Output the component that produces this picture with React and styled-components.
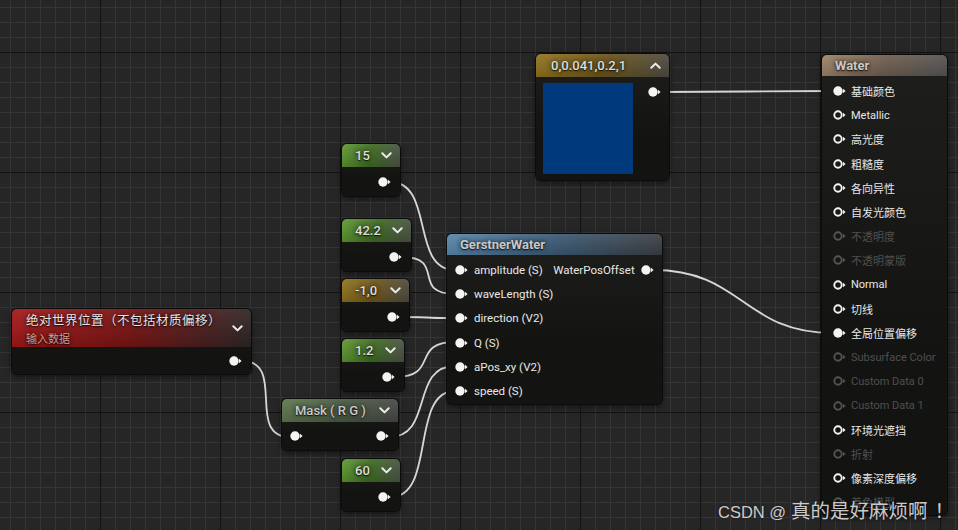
import React from 'react';
import styled, { createGlobalStyle } from 'styled-components';

const GlobalStyle = createGlobalStyle`
  html, body {
    margin: 0;
    padding: 0;
    background: #262626;
  }
  body {
    font-family: Roboto, "Noto Sans CJK SC", sans-serif;
  }
`;

const Canvas = styled.div`
  position: relative;
  width: 958px;
  height: 530px;
  overflow: hidden;
  background-color: #262626;
  background-image:
    linear-gradient(to right, #131313 1px, transparent 1px),
    linear-gradient(to bottom, #131313 1px, transparent 1px),
    linear-gradient(to right, #353535 1px, transparent 1px),
    linear-gradient(to bottom, #353535 1px, transparent 1px);
  background-size: 120px 120px, 120px 120px, 15px 15px, 15px 15px;
  background-position: 100px 0, 0 52px, 10px 0, 0 7px;
`;

const WireLayer = styled.svg`
  position: absolute;
  left: 0;
  top: 0;
  width: 958px;
  height: 530px;
  pointer-events: none;
`;

const TINTS = {
  green: ['#619a31', '#3d6a22', '#4b5146'],
  gold: ['#93741f', '#6b5519', '#4d4a42'],
  red: ['#a51818', '#781313', '#2c2626'],
  blue: ['#5a88ad', '#3b5a74', '#3b3f44'],
  brown: ['#a08468', '#6e5d4e', '#545454'],
  mask: ['#5f784f', '#4a5b43', '#454745'],
};

const Node = styled.div`
  position: absolute;
  left: ${p => p.$x}px;
  top: ${p => p.$y}px;
  width: ${p => p.$w}px;
  border-radius: 5px;
  overflow: hidden;
  background: linear-gradient(#1e1f1d, #131412 65%);
  box-shadow: 0 0 0 1px #0b0b0b, 0 2px 6px rgba(0, 0, 0, 0.6);
`;

const Header = styled.div`
  height: ${p => p.$h || 23}px;
  box-sizing: border-box;
  display: flex;
  align-items: center;
  justify-content: space-between;
  padding: 0 8px 0 ${p => p.$pl || 13}px;
  color: ${p => p.$muted ? '#c9c9c9' : '#dedede'};
  font-size: 13px;
  font-weight: ${p => p.$bold ? 700 : 500};
  text-shadow: 0 0 5px rgba(0, 0, 0, 0.85), 0 1px 1px rgba(0, 0, 0, 0.7);
  background:
    linear-gradient(rgba(255, 255, 255, 0.07), rgba(0, 0, 0, 0.12)),
    linear-gradient(100deg, ${p => TINTS[p.$tint][0]} 0%, ${p => TINTS[p.$tint][1]} 50%, ${p => TINTS[p.$tint][2]} 100%);
`;

const TitleStack = styled.div`
  display: flex;
  flex-direction: column;
  gap: 1px;
`;

const Title = styled.span`
  font-size: 12.5px;
  font-weight: 400;
  color: #e4e4e4;
  letter-spacing: 0.5px;
`;

const SubTitle = styled.span`
  font-size: 11px;
  font-weight: 400;
  color: #d69a8d;
`;

const Body = styled.div`
  height: ${p => p.$h}px;
  display: flex;
  align-items: center;
  justify-content: ${p => p.$between ? 'space-between' : 'flex-end'};
  padding: 0 9px 0 8px;
`;

const SwatchBody = styled.div`
  display: flex;
  align-items: flex-start;
  gap: 15px;
  padding: 6px 0 6px 7px;
`;

const Swatch = styled.div`
  width: 90px;
  height: 91px;
  background: ${p => p.$color};
`;

const SwatchPin = styled.div`
  margin-top: 4px;
  display: flex;
`;

const PinColumns = styled.div`
  display: flex;
  justify-content: space-between;
  padding: 3px 9px 1px ${p => p.$pl}px;
`;

const PinList = styled.div`
  display: flex;
  flex-direction: column;
`;

const PinRow = styled.div`
  height: 24.2px;
  display: flex;
  align-items: center;
  gap: ${p => p.$gap || 6}px;
  font-size: ${p => p.$fs || 11.5}px;
  color: ${p => p.$dim ? '#4f4f4f' : '#e8e8e8'};
  white-space: nowrap;
`;

const PinSvg = styled.svg`
  flex: none;
  display: block;
  opacity: ${p => p.$dim ? 0.28 : 1};
`;

const ChevSvg = styled.svg`
  flex: none;
  display: block;
`;

const Watermark = styled.div`
  position: absolute;
  left: 718px;
  top: 496px;
  display: flex;
  align-items: baseline;
  gap: 5px;
  font-family: "Liberation Sans", "Noto Sans CJK SC", sans-serif;
  line-height: 28px;
  color: rgba(236, 236, 236, 0.86);
  text-shadow: 0 0 2px rgba(0, 0, 0, 0.5);
  white-space: nowrap;
`;

const MarkLatin = styled.span`
  font-size: 16.5px;
`;

const MarkCjk = styled.span`
  font-family: "Noto Sans CJK SC", sans-serif;
  font-size: 19.5px;
`;

const MarkBang = styled.span`
  margin-left: 7px;
`;

const Pin = ({ filled, dim }) => (
  <PinSvg width="13" height="10" viewBox="0 0 13 10" $dim={dim}>
    {filled
      ? <circle cx="5" cy="5" r="4.7" fill="#f4f4f4" />
      : <circle cx="5" cy="5" r="3.7" fill="none" stroke="#f4f4f4" strokeWidth="1.9" />}
    <path d="M10 2.7 L12.6 5 L10 7.3 Z" fill="#f4f4f4" />
  </PinSvg>
);

const Chevron = ({ up }) => (
  <ChevSvg width="11" height="7" viewBox="0 0 11 7">
    <path
      d={up ? 'M1.3 5.8 L5.5 1.6 L9.7 5.8' : 'M1.3 1.2 L5.5 5.4 L9.7 1.2'}
      fill="none"
      stroke="#ececec"
      strokeWidth="2"
      strokeLinecap="round"
      strokeLinejoin="round"
    />
  </ChevSvg>
);

const constants = [
  { x: 342, y: 144, w: 58, label: '15', tint: 'green' },
  { x: 342, y: 219, w: 69, label: '42.2', tint: 'green' },
  { x: 342, y: 279, w: 67, label: '-1,0', tint: 'gold' },
  { x: 342, y: 339, w: 62, label: '1.2', tint: 'green' },
  { x: 342, y: 459, w: 58, label: '60', tint: 'green' },
];

const gerstnerInputs = ['amplitude (S)', 'waveLength (S)', 'direction (V2)', 'Q (S)', 'aPos_xy (V2)', 'speed (S)'];

// filled = connected, dim = unavailable for this material
const waterInputs = [
  { label: '基础颜色', filled: true },
  { label: 'Metallic' },
  { label: '高光度' },
  { label: '粗糙度' },
  { label: '各向异性' },
  { label: '自发光颜色' },
  { label: '不透明度', dim: true },
  { label: '不透明蒙版', dim: true },
  { label: 'Normal' },
  { label: '切线' },
  { label: '全局位置偏移', filled: true },
  { label: 'Subsurface Color', dim: true },
  { label: 'Custom Data 0', dim: true },
  { label: 'Custom Data 1', dim: true },
  { label: '环境光遮挡' },
  { label: '折射', dim: true },
  { label: '像素深度偏移' },
  { label: '着色模型', dim: true },
];

const wires = [
  [660, 92, 833, 91],
  [653, 270, 833, 333],
  [390, 182, 455, 270],
  [402, 257, 455, 294],
  [400, 317, 455, 318],
  [395, 377, 455, 342],
  [389, 437, 455, 366],
  [391, 497, 455, 391],
  [242, 361, 290, 437],
];

const wirePath = ([x1, y1, x2, y2]) => {
  const t = Math.max(45, Math.abs(x2 - x1) * 0.5);
  return `M${x1} ${y1} C${x1 + t} ${y1} ${x2 - t} ${y2} ${x2} ${y2}`;
};

const App = () => {
  return (
    <>
      <GlobalStyle />
      <Canvas>
        <WireLayer viewBox="0 0 958 530">
          {wires.map((w, i) => (
            <path key={i} d={wirePath(w)} fill="none" stroke="#d6d6d6" strokeWidth="1.8" />
          ))}
        </WireLayer>

        <Node $x={12} $y={309} $w={239}>
          <Header $tint="red" $h={38} $pl={14}>
            <TitleStack>
              <Title>绝对世界位置（不包括材质偏移）</Title>
              <SubTitle>输入数据</SubTitle>
            </TitleStack>
            <Chevron />
          </Header>
          <Body $h={27}>
            <Pin filled />
          </Body>
        </Node>

        {constants.map(c => (
          <Node key={c.label} $x={c.x} $y={c.y} $w={c.w}>
            <Header $tint={c.tint}>
              <span>{c.label}</span>
              <Chevron />
            </Header>
            <Body $h={29}>
              <Pin filled />
            </Body>
          </Node>
        ))}

        <Node $x={282} $y={399} $w={116}>
          <Header $tint="mask" $muted>
            <span>Mask ( R G )</span>
            <Chevron />
          </Header>
          <Body $h={28} $between>
            <Pin filled />
            <Pin filled />
          </Body>
        </Node>

        <Node $x={536} $y={54} $w={133}>
          <Header $tint="gold" $pl={15}>
            <span>0,0.041,0.2,1</span>
            <Chevron up />
          </Header>
          <SwatchBody>
            <Swatch $color="#00397c" />
            <SwatchPin>
              <Pin filled />
            </SwatchPin>
          </SwatchBody>
        </Node>

        <Node $x={447} $y={234} $w={215}>
          <Header $tint="blue" $h={21} $bold $muted>
            <span>GerstnerWater</span>
          </Header>
          <PinColumns $pl={8}>
            <PinList>
              {gerstnerInputs.map(label => (
                <PinRow key={label}>
                  <Pin filled />
                  <span>{label}</span>
                </PinRow>
              ))}
            </PinList>
            <PinList>
              <PinRow>
                <span>WaterPosOffset</span>
                <Pin filled />
              </PinRow>
            </PinList>
          </PinColumns>
        </Node>

        <Node $x={822} $y={55} $w={125}>
          <Header $tint="brown" $h={21} $bold $muted>
            <span>Water</span>
          </Header>
          <PinColumns $pl={11}>
            <PinList>
              {waterInputs.map(p => (
                <PinRow key={p.label} $dim={p.dim} $fs={11} $gap={5}>
                  <Pin filled={p.filled} dim={p.dim} />
                  <span>{p.label}</span>
                </PinRow>
              ))}
            </PinList>
          </PinColumns>
        </Node>

        <Watermark>
          <MarkLatin>CSDN @</MarkLatin>
          <MarkCjk>真的是好麻烦啊<MarkBang>！</MarkBang></MarkCjk>
        </Watermark>
      </Canvas>
    </>
  );
};

export default App;
